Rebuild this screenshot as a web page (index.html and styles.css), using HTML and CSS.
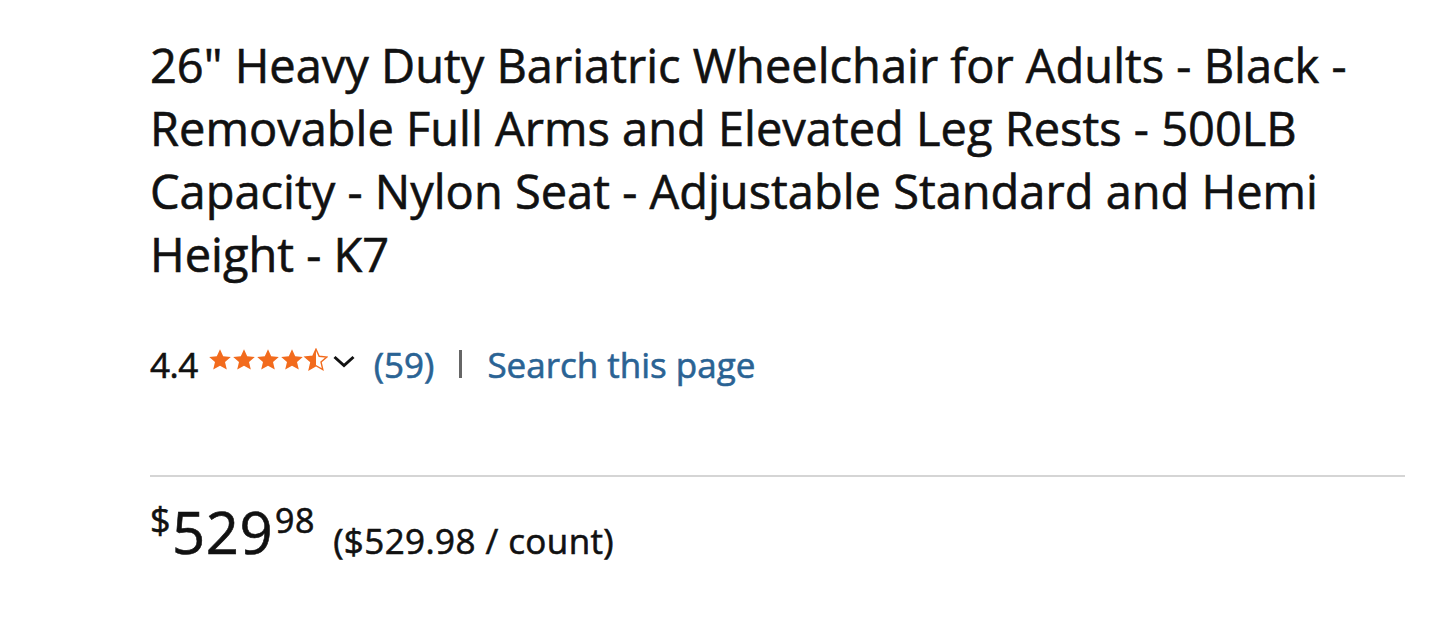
FILE: index.html
```html
<!DOCTYPE html>
<html>
  <head>
    <title>Wheelchair</title>
    <meta name="viewport" content="width=device-width, initial-scale=1.0">
    <link rel="stylesheet" href="styles.css">
  </head>
  <body>
    <div class="mainbody">
      <h1 class="title">26" Heavy Duty Bariatric Wheelchair for Adults - Black - Removable Full Arms and Elevated Leg Rests - 500LB Capacity - Nylon Seat - Adjustable Standard and Hemi Height - K7</h1>
      <div class="ratingrow">
        <span class="ratingnum">4.4</span>
        <span class="stars">
          <svg width="120" height="24" viewBox="0 0 120 24">
            <defs>
              <path id="st" d="M12 1.2l3.2 7.1 7.6.7-5.8 5 1.8 7.6L12 17.7l-6.8 3.9 1.8-7.6-5.8-5 7.6-.7z"/>
              <clipPath id="half"><rect x="0" y="0" width="12" height="24"/></clipPath>
            </defs>
            <use href="#st" x="0" fill="#f26b1d"/>
            <use href="#st" x="24" fill="#f26b1d"/>
            <use href="#st" x="48" fill="#f26b1d"/>
            <use href="#st" x="72" fill="#f26b1d"/>
            <g transform="translate(96 0)">
              <use href="#st" fill="none" stroke="#f26b1d" stroke-width="1.4"/>
              <use href="#st" fill="#f26b1d" clip-path="url(#half)"/>
            </g>
          </svg>
        </span>
        <svg class="chev" width="24" height="16" viewBox="0 0 24 16"><path d="M2.5 4l9.5 8.5 9.5-8.5" fill="none" stroke="#111" stroke-width="3"/></svg>
        <a class="link count">(59)</a>
        <span class="sep"></span>
        <a class="link">Search this page</a>
      </div>
      <div class="divider"></div>
      <div class="pricerow">
        <span class="price"><span class="sym">$</span>529<span class="frac">98</span></span>
        <span class="unit">($529.98 / count)</span>
      </div>
    </div>
  </body>
</html>
```
FILE: styles.css
```css
*{box-sizing:border-box;margin:0;padding:0;}
body{background:#fff;font-family:"Open Sans",sans-serif;color:#111;-webkit-text-stroke:0.6px currentColor;}
.mainbody{width:1436px;height:632px;padding:34px 32px 0 150px;overflow:hidden;}
.title{font-size:47px;font-weight:400;line-height:63px;width:1260px;color:#111;}
.ratingrow{display:flex;align-items:center;margin-top:56px;height:44px;font-size:35px;}
.ratingnum{margin-right:10px;letter-spacing:-0.5px;}
.stars{display:flex;align-items:center;margin-top:-8px;}
.chev{margin-left:4px;margin-right:18px;margin-top:-6px;}
.link{color:#2a6394;text-decoration:none;}
.sep{width:3px;height:28px;background:#666;margin:0 25px 0 25px;}
.divider{height:2px;background:#d5d5d5;margin-top:89px;width:1255px;}
.pricerow{margin-top:24px;line-height:62px;white-space:nowrap;}
.price{font-size:58px;letter-spacing:0.5px;margin-right:14px;}
.sym{font-size:36px;vertical-align:top;margin-right:1px;position:relative;top:-12px;}
.frac{font-size:34px;vertical-align:top;margin-left:2px;position:relative;top:-12px;}
.unit{font-size:35px;letter-spacing:0.4px;}
```
